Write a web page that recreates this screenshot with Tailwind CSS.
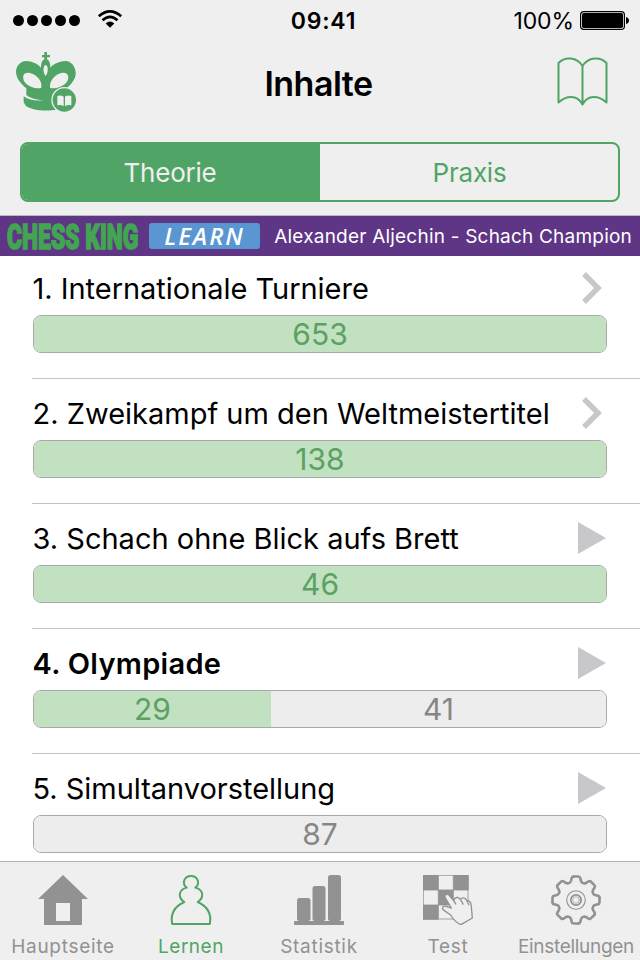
<!DOCTYPE html>
<html lang="de">
<head>
    <meta charset="UTF-8">
    <meta name="viewport" content="width=device-width, initial-scale=1.0">
    <title>Inhalte</title>
    <script src="https://cdn.jsdelivr.net/npm/@tailwindcss/browser@4"></script>
</head>
<body class="h-[960px] w-[640px] overflow-hidden bg-white font-['Inter','Liberation_Sans',sans-serif] text-black">
    <div class="flex h-full flex-col">
        <header class="h-[216px] shrink-0 border-b border-[#b9bdb9] bg-[#efefef]">
            <!-- Status bar -->
            <div class="grid h-10 grid-cols-3 items-center">
                <div class="flex items-center gap-[17px] pl-[13px]">
                    <div class="flex gap-[3px]">
                        <span class="size-[11px] rounded-full bg-black"></span>
                        <span class="size-[11px] rounded-full bg-black"></span>
                        <span class="size-[11px] rounded-full bg-black"></span>
                        <span class="size-[11px] rounded-full bg-black"></span>
                        <span class="size-[11px] rounded-full bg-black"></span>
                    </div>
                    <svg class="-mt-1 h-[19px] w-[26px]" viewBox="0 0 26 19" fill="none" stroke="#000" stroke-width="2.7">
                        <path d="M1.8 7.2Q13-2.6 24.2 7.2"/>
                        <path d="M5.5 11.3Q13 4.5 20.5 11.3"/>
                        <path d="M8.7 14.4Q13 10.8 17.3 14.4L13 18.8Z" fill="#000" stroke="none"/>
                    </svg>
                </div>
                <div class="pt-0.5 pl-[7px] text-center text-[23px] font-semibold tracking-[0.8px]">09:41</div>
                <div class="flex items-center justify-end gap-1.5 pr-[11px]">
                    <span class="pt-0.5 text-[23px] tracking-[-0.1px]">100%</span>
                    <svg class="h-[19px] w-[49px]" viewBox="0 0 49 19">
                        <rect x=".6" y=".6" width="43.8" height="17.8" rx="3.2" fill="none" stroke="#000" stroke-width="1.2"/>
                        <rect x="2" y="2" width="41" height="15" rx="1.8"/>
                        <path d="M46 6Q49 7 49 9.500T46 13Z"/>
                    </svg>
                </div>
            </div>

            <!-- Title bar -->
            <div class="flex h-[88px] items-center justify-between pr-8 pl-4">
                <svg class="-mt-1 size-[60px]" viewBox="0 0 180 180" fill="#50a566">
                    <path d="M85 0h8v9h9v7h-9v7h-8v-7h-7V9h7Z"/>
                    <path fill-rule="evenodd" d="M89 21C79 21 75 33 75 47C67 37 48 27 30 27C12 28 0 43 0 60C1 82 18 98 31 109V129C44 140 62 143 81 145C59 147 38 145 23 133V151C27 157 28 160 31 163C56 180 121 180 151 163V109C165 97 180 82 179 62C178 43 166 28 149 27C130 27 112 36 103 47C103 33 99 21 89 21ZM89 39C97 40 98 61 89 72C80 61 81 40 89 39ZM22 71C27 57 48 62 61 73C73 82 78 94 76 107C62 111 44 107 31 96C24 90 20 80 22 71ZM156 71C151 57 130 62 117 73C106 82 101 94 102 107C116 111 134 107 147 96C154 90 159 80 156 71Z"/>
                    <circle cx="145" cy="144" r="39" fill="#efefef"/>
                    <circle cx="145" cy="144" r="35"/>
                    <path d="M124 132Q135 128 143 134V163Q135 157 124 160ZM147 134Q155 128 166 132V160Q155 157 147 163Z" fill="#efefef"/>
                </svg>
                <h1 class="pl-[4px] text-[34px] leading-none font-semibold tracking-[-0.5px]">Inhalte</h1>
                <svg class="-mt-1 mb-0.5 h-[49px] w-[51px]" viewBox="0 0 51 49" fill="none" stroke="#50a566" stroke-width="2" stroke-linejoin="round">
                    <path d="M25.500 9C20 0 8-1 1.500 6V45.500C9 38.500 20 37 25.500 47.500C31 37 42 38.500 49.500 45.500V6C43-1 31 0 25.500 9V47.500"/>
                </svg>
            </div>

            <!-- Segmented control -->
            <div class="mx-5 mt-3.5 grid h-[60px] grid-cols-2 overflow-hidden rounded-lg border-2 border-[#50a566] text-[26px] tracking-[-0.2px]">
                <div class="flex items-center justify-center bg-[#50a566] pr-0.5 text-[#efefef]">Theorie</div>
                <div class="flex items-center justify-center pl-px text-[#50a566]">Praxis</div>
            </div>
        </header>

        <!-- Course banner -->
        <div class="flex h-10 shrink-0 items-center bg-[#5e3685] pr-2 pl-1.5">
            <svg class="h-10 w-[135px]" viewBox="0 0 135 40">
                <text transform="translate(1 32.500) scale(.76 1)" textLength="173" lengthAdjust="spacingAndGlyphs" font-family="Liberation Sans Narrow, Roboto" font-weight="900" font-size="35" fill="#42a552" stroke="#42a552" stroke-width="1.600">CHESS KING</text>
            </svg>
            <div class="ml-2 flex h-[26px] w-[111px] items-center justify-center rounded-[3px] bg-[#5a96d1] font-['Open_Sans','Noto_Sans',sans-serif] text-[24px] leading-none font-semibold tracking-[2px] text-white italic">LEARN</div>
            <span class="ml-auto pt-[3px] text-[19px] tracking-[0.21px] whitespace-nowrap text-white">Alexander Aljechin - Schach Champion</span>
        </div>

        <!-- Chapters -->
        <main class="-mt-0.5 min-h-0 flex-1 overflow-hidden pl-8">
            <section class="h-[125px] border-b border-[#c2c2c4]">
                <div class="flex h-[61px] items-center justify-between pt-[9px] pr-[38px]">
                    <h2 class="pl-[0.5px] text-[29px] tracking-[-0.03px] whitespace-nowrap">1. Internationale Turniere</h2>
                    <svg class="-mt-0.5 h-8 w-5 shrink-0" viewBox="0 0 20 32" fill="none" stroke="#c7c7cc" stroke-width="5.500"><path d="M2 2L16 16L2 30"/></svg>
                </div>
                <div class="ml-px flex h-[38px] w-[574px] overflow-hidden rounded-lg border border-[#a8a8aa] text-[30px] leading-[37px]">
                    <div class="w-full bg-[#c1e1c1] text-center text-[#5ba162]">653</div>
                </div>
            </section>
            <section class="h-[125px] border-b border-[#c2c2c4]">
                <div class="flex h-[61px] items-center justify-between pt-[9px] pr-[38px]">
                    <h2 class="pl-[0.5px] text-[29px] whitespace-nowrap">2. Zweikampf um den Weltmeistertitel</h2>
                    <svg class="-mt-0.5 h-8 w-5 shrink-0" viewBox="0 0 20 32" fill="none" stroke="#c7c7cc" stroke-width="5.500"><path d="M2 2L16 16L2 30"/></svg>
                </div>
                <div class="ml-px flex h-[38px] w-[574px] overflow-hidden rounded-lg border border-[#a8a8aa] text-[30px] leading-[37px]">
                    <div class="w-full bg-[#c1e1c1] text-center text-[#5ba162]">138</div>
                </div>
            </section>
            <section class="h-[125px] border-b border-[#c2c2c4]">
                <div class="flex h-[61px] items-center justify-between pt-[9px] pr-[34px]">
                    <h2 class="pl-[0.5px] text-[29px] whitespace-nowrap">3. Schach ohne Blick aufs Brett</h2>
                    <svg class="-mt-0.5 h-8 w-7 shrink-0" viewBox="0 0 28 32" fill="#c7c7cc"><path d="M0 0L28 16L0 32Z"/></svg>
                </div>
                <div class="ml-px flex h-[38px] w-[574px] overflow-hidden rounded-lg border border-[#a8a8aa] text-[30px] leading-[37px]">
                    <div class="w-full bg-[#c1e1c1] text-center text-[#5ba162]">46</div>
                </div>
            </section>
            <section class="h-[125px] border-b border-[#c2c2c4]">
                <div class="flex h-[61px] items-center justify-between pt-[9px] pr-[34px]">
                    <h2 class="pl-[0.5px] text-[29px] font-semibold tracking-[0.3px] whitespace-nowrap">4. Olympiade</h2>
                    <svg class="-mt-0.5 h-8 w-7 shrink-0" viewBox="0 0 28 32" fill="#c7c7cc"><path d="M0 0L28 16L0 32Z"/></svg>
                </div>
                <div class="ml-px flex h-[38px] w-[574px] overflow-hidden rounded-lg border border-[#a8a8aa] text-[30px] leading-[37px]">
                    <div class="w-[237px] bg-[#c1e1c1] text-center text-[#5ba162]">29</div>
                    <div class="flex-1 bg-[#ededed] text-center text-[#868686]">41</div>
                </div>
            </section>
            <section class="h-[125px] border-b border-[#c2c2c4]">
                <div class="flex h-[61px] items-center justify-between pt-[9px] pr-[34px]">
                    <h2 class="pl-[0.5px] text-[29px] tracking-[-0.03px] whitespace-nowrap">5. Simultanvorstellung</h2>
                    <svg class="-mt-0.5 h-8 w-7 shrink-0" viewBox="0 0 28 32" fill="#c7c7cc"><path d="M0 0L28 16L0 32Z"/></svg>
                </div>
                <div class="ml-px flex h-[38px] w-[574px] overflow-hidden rounded-lg border border-[#a8a8aa] text-[30px] leading-[37px]">
                    <div class="w-full bg-[#ededed] text-center text-[#868686]">87</div>
                </div>
            </section>
        </main>

        <!-- Tab bar -->
        <nav class="h-[99px] shrink-0 border-t border-[#b0b4b0] bg-[#efefef] text-[19px] text-[#929292]">
            <div class="-ml-px grid w-[640px] grid-cols-5">
                <div class="flex flex-col items-center gap-2.5 pt-[13px]">
                    <svg class="size-[50px]" viewBox="0 0 50 50" fill="#929292">
                        <path fill-rule="evenodd" d="M25 0L50 24H44V50H6V24H0ZM18 28V46H32V28Z"/>
                    </svg>
                    <span class="leading-6 tracking-[0.7px]">Hauptseite</span>
                </div>
                <div class="flex flex-col items-center gap-2.5 pt-[13px] text-[#50a566]">
                    <svg class="size-[50px]" viewBox="0 0 50 50" fill="none" stroke="#50a566" stroke-width="2" stroke-linejoin="round">
                        <path d="M20.700 12.600C15.500 9 18 1 25 1S34.500 9 29.300 12.600C37 14.500 39 22 31.700 27C40.500 31 46 38 43.800 49H6.200C4 38 9.500 31 18.300 27C11 22 13 14.500 20.700 12.600Z"/>
                    </svg>
                    <span class="leading-6 tracking-[0.5px]">Lernen</span>
                </div>
                <div class="flex flex-col items-center gap-2.5 pt-[13px]">
                    <svg class="size-[50px]" viewBox="0 0 50 50" fill="#929292">
                        <rect x="3" y="23" width="13.500" height="23" rx="2.500"/>
                        <rect x="18.500" y="11" width="13" height="35" rx="2.500"/>
                        <rect x="34" y="0" width="13" height="46" rx="2.500"/>
                        <rect x="0" y="46" width="50" height="4" rx=".7"/>
                    </svg>
                    <span class="leading-6 tracking-[0.7px]">Statistik</span>
                </div>
                <div class="flex flex-col items-center gap-2.5 pt-[13px] pl-0.5">
                    <svg class="size-[50px]" viewBox="0 0 150 150" fill="#929292">
                        <path d="M0 0H46V45H0ZM91 0H137V45H91ZM46 45H91V90H46ZM0 90H46V134H0Z"/>
                        <path d="M1 1H135V132H1ZM46 1V132M91 1V132M1 45H135M1 90H135" fill="none" stroke="#929292" stroke-width="2.500"/>
                        <path d="M66 62C67 56 77 56 81 64L92 77C95 66 105 64 112 73C118 66 127 68 131 76C142 76 145 84 145 96L148 129L114 149C99 143 92 136 83 120L60 104C56 98 61 91 69 94L85 99L68 70Q65 66 66 62Z" fill="#efefef" stroke="#929292" stroke-width="4" stroke-linejoin="round"/>
                        <path d="M92 77L99 88M112 73L121 89M131 76L138 91" fill="none" stroke="#929292" stroke-width="4"/>
                    </svg>
                    <span class="leading-6 tracking-[0.7px]">Test</span>
                </div>
                <div class="flex flex-col items-center gap-2.5 pt-[13px] pl-0.5">
                    <svg class="size-[50px]" viewBox="-25 -25 50 50" fill="none" stroke="#929292" stroke-width="2.600" stroke-linecap="round">
                        <defs>
                            <path id="tooth" d="M-2.500-23.500H2.500Q4-23.500 4.300-22L5-19Q5.600-17.500 7-16.900Q8.500-16.200 9.900-17L12.500-18.600Q13.800-19.400 14.850-18.380"/>
                        </defs>
                        <use href="#tooth"/>
                        <use href="#tooth" transform="rotate(45)"/>
                        <use href="#tooth" transform="rotate(90)"/>
                        <use href="#tooth" transform="rotate(135)"/>
                        <use href="#tooth" transform="rotate(180)"/>
                        <use href="#tooth" transform="rotate(225)"/>
                        <use href="#tooth" transform="rotate(270)"/>
                        <use href="#tooth" transform="rotate(315)"/>
                        <circle r="9.300" stroke-width="1.100"/>
                        <circle r="5.200" stroke-width="1.700"/>
                        <circle r="3.300" stroke-width=".6"/>
                    </svg>
                    <span class="leading-6 tracking-[-0.3px]">Einstellungen</span>
                </div>
            </div>
        </nav>
    </div>
</body>
</html>
